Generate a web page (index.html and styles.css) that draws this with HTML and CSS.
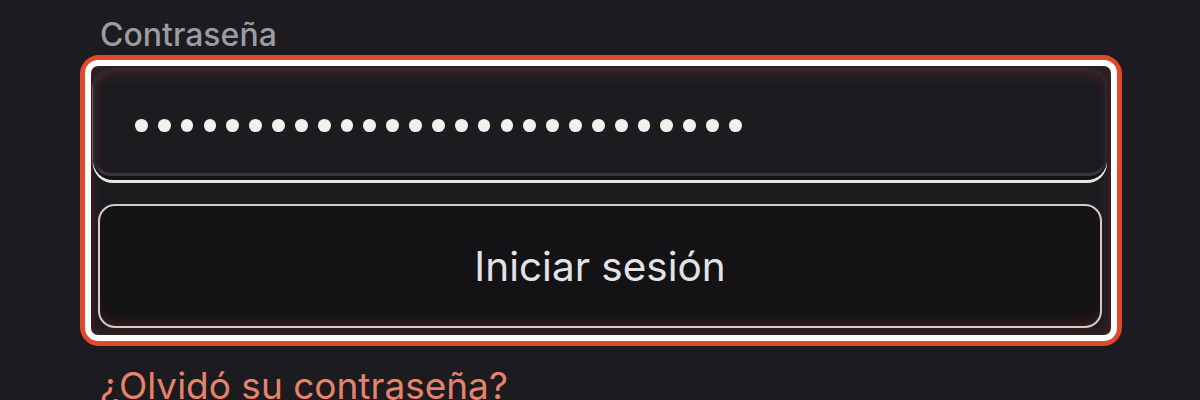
FILE: index.html
```html
<!DOCTYPE html>
<html lang="es">
<head>
<meta charset="utf-8">
<title>Iniciar sesión</title>
<link rel="stylesheet" href="styles.css">
</head>
<body>
<main class="form">
  <label class="label">Contraseña</label>
  <div class="focus-ring">
    <div class="frame">
      <div class="input-wrap">
        <div class="input" aria-label="contraseña">
          <span class="dot"></span><span class="dot"></span><span class="dot"></span><span class="dot"></span><span class="dot"></span><span class="dot"></span><span class="dot"></span><span class="dot"></span><span class="dot"></span><span class="dot"></span><span class="dot"></span><span class="dot"></span><span class="dot"></span><span class="dot"></span><span class="dot"></span><span class="dot"></span><span class="dot"></span><span class="dot"></span><span class="dot"></span><span class="dot"></span><span class="dot"></span><span class="dot"></span><span class="dot"></span><span class="dot"></span><span class="dot"></span><span class="dot"></span><span class="dot"></span>
        </div>
      </div>
      <button class="button">Iniciar sesión</button>
    </div>
  </div>
  <a class="link" href="#">¿Olvidó su contraseña?</a>
</main>
</body>
</html>
```

FILE: styles.css
```css
html, body {
  margin: 0;
  background: #1c1b20;
  height: 100%;
  overflow: hidden;
}
body {
  font-family: Inter, "Noto Sans", sans-serif;
}
.form {
  display: flex;
  flex-direction: column;
  width: 1042px;
  margin-left: 80px;
}
.label {
  color: #9c9ba1;
  font-size: 32px;
  font-weight: 500;
  line-height: 36px;
  margin: 16.5px 0 2.5px 20px;
}
.focus-ring {
  border: 5.5px solid #e2482a;
  border-radius: 19px;
}
.frame {
  border: 6px solid #ffffff;
  border-radius: 13px;
  background: #1c1b20;
  box-shadow: inset 0 0 14px rgba(110, 45, 40, 0.55);
  padding: 2px 4px 7px 2px;
  display: flex;
  flex-direction: column;
}
.input-wrap {
  height: 108px;
  padding-bottom: 4px;
  border-radius: 20px;
  background: #141317;
  box-shadow: 0 3px 0 #ece6e3, -1px 1px 0 rgba(220, 200, 200, 0.35);
}
.input {
  box-sizing: border-box;
  height: 108px;
  border-radius: 18px;
  background: #1c1b20;
  border: 2px solid #2c2b31;
  border-bottom-width: 3px;
  border-bottom-color: #38373d;
  box-shadow: inset 0 8px 12px -4px rgba(100, 45, 45, 0.55), inset 4px 0 10px -4px rgba(100, 45, 45, 0.4);
  display: flex;
  align-items: center;
  gap: 10.05px;
  padding: 8px 0 0 40px;
}
.dot {
  width: 12.8px;
  height: 12.8px;
  border-radius: 50%;
  background: #f3f1ec;
  flex: none;
}
.button {
  margin: 24px 5px 0 5px;
  height: 124px;
  border: 2px solid #d5cac7;
  border-radius: 17px;
  background: #131215;
  box-shadow: inset 0 -8px 12px -4px rgba(110, 45, 40, 0.45);
  color: #e3e3e5;
  font-family: Inter, "Noto Sans", sans-serif;
  font-size: 40.5px;
  font-weight: 400;
  padding: 0;
  cursor: pointer;
}
.link {
  color: #e6836a;
  font-size: 37px;
  line-height: 45px;
  text-decoration: none;
  margin: 17px 0 0 20px;
}
```
